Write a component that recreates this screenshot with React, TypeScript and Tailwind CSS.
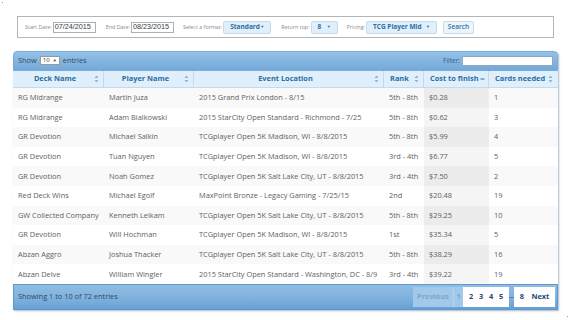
import React from "react";

const rows: [string, string, string, string, string, string][] = [
  ["RG Midrange", "Martin Juza", "2015 Grand Prix London - 8/15", "5th - 8th", "$0.28", "1"],
  ["RG Midrange", "Adam Bialkowski", "2015 StarCity Open Standard - Richmond - 7/25", "5th - 8th", "$0.62", "3"],
  ["GR Devotion", "Michael Salkin", "TCGplayer Open 5K Madison, WI - 8/8/2015", "5th - 8th", "$5.99", "4"],
  ["GR Devotion", "Tuan Nguyen", "TCGplayer Open 5K Madison, WI - 8/8/2015", "3rd - 4th", "$6.77", "5"],
  ["GR Devotion", "Noah Gomez", "TCGplayer Open 5K Salt Lake City, UT - 8/8/2015", "3rd - 4th", "$7.50", "2"],
  ["Red Deck Wins", "Michael Egolf", "MaxPoint Bronze - Legacy Gaming - 7/25/15", "2nd", "$20.48", "19"],
  ["GW Collected Company", "Kenneth Leikam", "TCGplayer Open 5K Salt Lake City, UT - 8/8/2015", "5th - 8th", "$29.25", "10"],
  ["GR Devotion", "Will Hochman", "TCGplayer Open 5K Madison, WI - 8/8/2015", "1st", "$35.34", "5"],
  ["Abzan Aggro", "Joshua Thacker", "TCGplayer Open 5K Salt Lake City, UT - 8/8/2015", "5th - 8th", "$38.29", "16"],
  ["Abzan Delve", "William Wingler", "2015 StarCity Open Standard - Washington, DC - 8/9", "3rd - 4th", "$39.22", "19"],
];

const cols = "grid grid-cols-[91px_90px_190px_40px_65px_68px]";

function SortBoth() {
  return (
    <svg width="5" height="8" viewBox="0 0 5 8" className="absolute right-[4px] top-1/2 -translate-y-1/2">
      <path d="M2.5 0.5 L4.5 3 L0.5 3 Z" fill="#8fb3d3" />
      <path d="M2.5 7.5 L4.5 5 L0.5 5 Z" fill="#8fb3d3" />
    </svg>
  );
}

function SortUp() {
  return (
    <svg width="5" height="4" viewBox="0 0 5 4" className="absolute right-[3px] top-1/2 -translate-y-1/2">
      <path d="M0.5 1.5 L4.5 1.5 L4.5 2.5 L0.5 2.5 Z" fill="#2e6e9e" />
    </svg>
  );
}

function Sel({ label, w }: { label: string; w: string }) {
  return (
    <div
      className={`${w} shrink-0 h-[13px] flex items-center justify-between pl-[6px] pr-[6px] bg-[#dfeffc] border border-[#c5dbec] rounded-[2px] text-[6.5px] font-bold text-[#2e6e9e]`}
    >
      <span>{label}</span>
      <span className="text-[4px]">▼</span>
    </div>
  );
}

const inputFont = { fontFamily: '"Liberation Sans", sans-serif' };
const lbl = "shrink-0 whitespace-nowrap pr-[1px]";

export default function App() {
  const headers = ["Deck Name", "Player Name", "Event Location", "Rank", "Cost to finish", "Cards needed"];
  return (
    <div className="relative w-[571px] h-[320px] bg-white overflow-hidden" style={{ fontFamily: '"Open Sans", "Liberation Sans", sans-serif' }}>
      <span className="absolute left-[2px] top-[2px] w-[1px] h-[1px] bg-[#999]" />
      <span className="absolute left-[567px] top-[316px] w-[1px] h-[1px] bg-[#999]" />

      <div className="pt-[16px] pl-[17px]">
        {/* filter bar */}
        <div className="w-[537px] h-[22px] border border-[#b5b5b5] flex items-center pl-[7px] text-[5.4px] text-[#8a8a8a]">
          <span className={lbl}>Start Date:</span>
          <div className="shrink-0 w-[43px] h-[11px] border border-[#b0b0b0] flex items-center pl-[1px] text-[7.2px] text-[#2b3a4a]" style={inputFont}>
            07/24/2015
          </div>
          <span className={`ml-[10px] ${lbl}`}>End Date:</span>
          <div className="shrink-0 w-[43px] h-[11px] border border-[#b0b0b0] flex items-center pl-[1px] text-[7.2px] text-[#2b3a4a]" style={inputFont}>
            08/23/2015
          </div>
          <span className={`ml-[9px] ${lbl}`}>Select a format:</span>
          <Sel label="Standard" w="w-[48px]" />
          <span className={`ml-[10px] ${lbl}`}>Return top:</span>
          <Sel label="8" w="w-[27px]" />
          <span className={`ml-[9px] ${lbl}`}>Pricing:</span>
          <Sel label="TCG Player Mid" w="w-[71px]" />
          <div className="ml-[6px] shrink-0 w-[31px] h-[13px] flex items-center justify-center bg-[#eef6fd] border border-[#c5dbec] rounded-[2px] text-[6.5px] text-[#2e6e9e] font-semibold">
            Search
          </div>
        </div>
      </div>

      {/* table widget */}
      <div className="ml-[13px] mt-[13px] w-[545px] rounded-t-[4px] shadow-[1px_1px_2px_rgba(60,100,140,0.45)]">
        {/* top toolbar */}
        <div className="h-[20px] rounded-t-[4px] bg-gradient-to-b from-[#94c1e6] to-[#74a9d8] border border-[#79acd8] flex items-center justify-between pl-[4px] pr-[4px] text-[7.4px] text-[#2f4d68]">
          <div className="flex items-center">
            <span>Show</span>
            <div className="ml-[3px] w-[20px] h-[9px] bg-white border border-[#999] flex items-center justify-between px-[2px] text-[6px] text-[#333]">
              <span>10</span>
              <span className="text-[4px]">▼</span>
            </div>
            <span className="ml-[3px]">entries</span>
          </div>
          <div className="flex items-center">
            <span className="text-[6.5px] text-[#3d5d7a]">Filter:</span>
            <div className="ml-[2px] w-[91px] h-[10px] bg-white border border-[#8aa9c4]" />
          </div>
        </div>

        {/* header row */}
        <div className={`${cols} h-[17px] bg-[#dfeffc] border-b border-[#c5dbec]`}>
          {headers.map((h, i) => (
            <div
              key={h}
              className={`relative h-full flex items-center whitespace-nowrap ${i >= 3 ? "justify-start pl-[6px]" : "justify-center pr-[6px]"} text-[7.4px] font-bold text-[#2e6e9e] ${i < 5 ? "border-r border-[#c5dbec]" : ""}`}
            >
              {h}
              {i === 4 ? <SortUp /> : <SortBoth />}
            </div>
          ))}
        </div>

        {/* body */}
        {rows.map((r, ri) => (
          <div key={ri} className={`${cols} h-[19.6px] ${ri % 2 === 0 ? "bg-[#f9f9f9]" : "bg-white"} text-[7.4px] text-[#616161]`}>
            {r.map((c, ci) => (
              <div
                key={ci}
                className={`h-full flex items-center pl-[5px] whitespace-nowrap overflow-hidden ${
                  ci === 4 ? (ri % 2 === 0 ? "bg-[#ececec]" : "bg-[#f5f5f5]") : ""
                }`}
              >
                {c}
              </div>
            ))}
          </div>
        ))}

        {/* footer */}
        <div className="h-[26px] bg-gradient-to-b from-[#8fbde3] via-[#82b3de] to-[#68a0d3] border border-[#5f98cc] flex items-center justify-between pl-[4px] pr-[2px] text-[7.4px] text-[#2c4a66]">
          <span>Showing 1 to 10 of 72 entries</span>
          <div className="flex items-center h-[20px] text-[7.4px] font-bold">
            <div className="h-full w-[40px] flex items-center justify-center bg-[#a3c9ea] text-[#7aa6cf]">Previous</div>
            <div className="h-full w-[10px] flex items-center justify-center bg-[#a3c9ea] text-[#7aa6cf] border-l border-[#b7d5ef]">1</div>
            <div className="h-full w-[46px] flex items-center justify-around px-[3px] bg-white text-[#1f4a72]">
              <span>2</span>
              <span>3</span>
              <span>4</span>
              <span>5</span>
            </div>
            <div className="w-[5px] text-center text-[6px] text-[#2c4a66]">…</div>
            <div className="h-full w-[41px] flex items-center justify-around px-[2px] bg-white text-[#1f4a72]">
              <span>8</span>
              <span>Next</span>
            </div>
          </div>
        </div>
      </div>
    </div>
  );
}
